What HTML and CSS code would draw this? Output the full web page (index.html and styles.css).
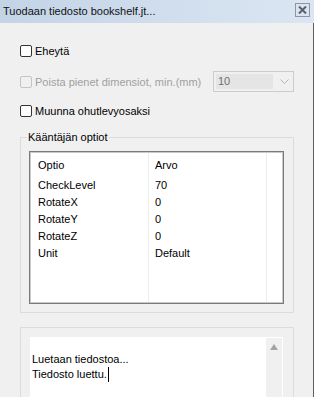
FILE: index.html
```html
<!DOCTYPE html>
<html lang="fi">
<head>
    <meta charset="UTF-8">
    <title>Tuodaan tiedosto</title>
    <link rel="stylesheet" href="styles.css">
</head>
<body>

<div class="dialog">
    <div class="titlebar">
        <span class="title">Tuodaan tiedosto bookshelf.jt...</span>
        <span class="close">
            <svg width="9" height="8" viewBox="0 0 9 8">
                <path d="M1 0.5 L8 7.5 M8 0.5 L1 7.5" stroke="#56616e" stroke-width="2"/>
            </svg>
        </span>
    </div>

    <div class="content">
        <label class="check"><span class="box"></span>Eheytä</label>

        <div class="row">
            <label class="check disabled"><span class="box"></span>Poista pienet dimensiot, min.(mm)</label>
            <div class="combo">
                <span class="combo-value">10</span>
                <svg class="chevron" width="9" height="5" viewBox="0 0 9 5">
                    <path d="M0.5 0.5 L4.5 4.5 L8.5 0.5" fill="none" stroke="#b4b4b4" stroke-width="1"/>
                </svg>
            </div>
        </div>

        <label class="check"><span class="box"></span>Muunna ohutlevyosaksi</label>

        <fieldset class="group">
            <legend>Kääntäjän optiot</legend>
            <div class="listview">
                <div class="col col-name">
                    <div class="head">Optio</div>
                    <div class="cell">CheckLevel</div>
                    <div class="cell">RotateX</div>
                    <div class="cell">RotateY</div>
                    <div class="cell">RotateZ</div>
                    <div class="cell">Unit</div>
                </div>
                <div class="col col-value">
                    <div class="head">Arvo</div>
                    <div class="cell">70</div>
                    <div class="cell">0</div>
                    <div class="cell">0</div>
                    <div class="cell">0</div>
                    <div class="cell">Default</div>
                </div>
                <div class="col col-fill"></div>
            </div>
        </fieldset>

        <div class="group log-group">
            <div class="log">
                <div class="log-text">Luetaan tiedostoa...<br>Tiedosto luettu.<span class="caret"></span></div>
                <div class="scrollbar"><span class="arrow-up"></span></div>
            </div>
        </div>
    </div>
</div>

</body>
</html>
```

FILE: styles.css
```css
body {
    margin: 0;
    background: #fff;
    font-family: "Liberation Sans", Arial, sans-serif;
    font-size: 11px;
    color: #000;
}

.dialog {
    width: 314px;
    height: 397px;
    overflow: hidden;
}

.titlebar {
    height: 23px;
    display: flex;
    align-items: center;
    justify-content: space-between;
    padding: 0 4px 0 3px;
    background: linear-gradient(to right, #c3d4e7, #dbe6f2);
    box-sizing: border-box;
}

.title {
    font-size: 11px;
    color: #111;
    margin-top: -1px;
}

.close {
    width: 13px;
    height: 12px;
    margin-top: -3px;
    border: 1px solid #8996a5;
    background: #dbe4ee;
    display: flex;
    align-items: center;
    justify-content: center;
}

.content {
    height: 374px;
    background: #f0f0f0;
    border-right: 1px solid #5f5f5f;
    padding: 20px 19px 0 20px;
    box-sizing: border-box;
}

.check {
    display: flex;
    align-items: center;
    height: 16px;
}

.box {
    width: 10px;
    height: 10px;
    border: 1px solid #333;
    border-radius: 2px;
    background: #fff;
    margin-right: 3px;
}

.check.disabled {
    color: #a0a0a0;
}

.check.disabled .box {
    border-color: #c4c4c4;
    background: #f0f0f0;
}

.row {
    display: flex;
    align-items: center;
    margin: 12px 0 11px;
}

.combo {
    margin-left: auto;
    width: 79px;
    height: 19px;
    border: 1px solid #cccccc;
    background: #f0f0f0;
    display: flex;
    align-items: center;
}

.combo-value {
    width: 55px;
    margin-left: 2px;
    padding-left: 2px;
    line-height: 15px;
    background: #e5e5e5;
    color: #6d6d7a;
}

.chevron {
    margin-left: auto;
    margin-right: 4px;
}

.group {
    border: 1px solid #dcdcdc;
    margin: 11px 0 0;
    padding: 7px 9px 8px 8px;
    min-width: 0;
}

.group legend {
    padding: 0 1px;
    margin-left: -2px;
    line-height: 14px;
}

.listview {
    height: 149px;
    display: flex;
    background: #fff;
    border: 1px solid #7a7a7a;
    box-shadow: inset 0 0 0 1px #c9c9c9;
    padding: 1px;
}

.col {
    border-right: 1px solid #eaeef3;
}

.col-name {
    width: 117px;
}

.col-value {
    width: 117px;
}

.col-fill {
    flex: 1;
    border-right: none;
}

.head {
    height: 24px;
    line-height: 24px;
    padding-left: 7px;
}

.cell {
    height: 17px;
    line-height: 17px;
    padding-left: 7px;
}

.col-value .head,
.col-value .cell {
    padding-left: 6px;
}

.log-group {
    margin-top: 14px;
    height: 80px;
    padding: 9px 10px 0 9px;
}

.log {
    height: 100%;
    display: flex;
    background: #fff;
    border: 1px solid #fff;
}

.log-text {
    flex: 1;
    padding: 14px 0 0 1px;
    line-height: 15px;
}

.caret {
    display: inline-block;
    width: 1px;
    height: 15px;
    margin-left: 1px;
    vertical-align: -4px;
    background: #000;
}

.scrollbar {
    width: 16px;
    background: #f0f0f0;
    display: flex;
    justify-content: center;
}

.arrow-up {
    width: 0;
    height: 0;
    margin-top: 6px;
    border-left: 4px solid transparent;
    border-right: 4px solid transparent;
    border-bottom: 6px solid #a3a3a3;
}
```
